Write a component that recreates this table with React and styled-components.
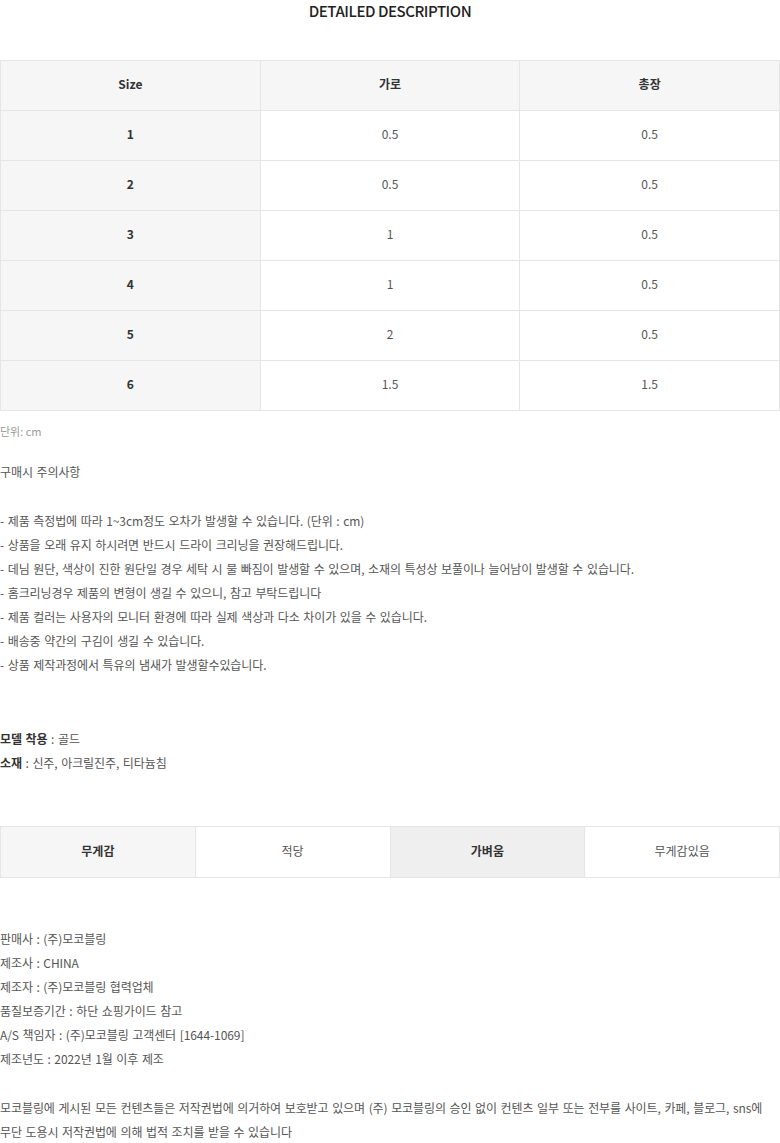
import styled, { createGlobalStyle } from "styled-components";

const GlobalStyle = createGlobalStyle`
  body {
    margin: 0;
    background: #fff;
    font-family: "Noto Sans CJK KR", "Noto Sans", sans-serif;
    color: #555;
  }
`;

const Page = styled.div`
  width: 780px;
  display: flex;
  flex-direction: column;
`;

const Title = styled.h2`
  margin: 0;
  height: 24px;
  line-height: 22px;
  text-align: center;
  font-family: "Noto Sans CJK KR", "Noto Sans", sans-serif;
  font-size: 15px;
  font-weight: 500;
  letter-spacing: -0.45px;
  color: #222;
`;

const SizeTable = styled.div`
  margin-top: 36px;
  display: grid;
  grid-template-columns: repeat(3, 1fr);
  border-top: 1px solid #e5e5e5;
  border-left: 1px solid #e5e5e5;
`;

const Cell = styled.div`
  height: 50px;
  box-sizing: border-box;
  padding-bottom: 4px;
  display: flex;
  align-items: center;
  justify-content: center;
  border-right: 1px solid #e5e5e5;
  border-bottom: 1px solid #e5e5e5;
  background: ${(p) => (p.$head ? "#f6f6f6" : "#fff")};
  font-size: 12px;
  font-weight: ${(p) => (p.$head ? 700 : 400)};
  color: ${(p) => (p.$head ? "#333" : "#555")};
`;

const Unit = styled.p`
  margin: 12px 0 0;
  font-size: 11px;
  line-height: 16px;
  color: #999;
`;

const Line = styled.p`
  margin: 0;
  font-size: 12px;
  line-height: 24px;
  word-spacing: 1px;
  letter-spacing: -0.08px;
  color: #555;
  white-space: nowrap;
`;

const Block = styled.div`
  display: flex;
  flex-direction: column;
  margin-top: ${(p) => p.$gap}px;
`;

const Strong = styled.b`
  font-weight: 700;
  color: #333;
`;

const WeightTable = styled.div`
  margin-top: 51px;
  display: grid;
  grid-template-columns: repeat(4, 1fr);
  border-top: 1px solid #e5e5e5;
  border-left: 1px solid #e5e5e5;
`;

const WeightCell = styled.div`
  height: 51px;
  box-sizing: border-box;
  padding-bottom: 3px;
  display: flex;
  align-items: center;
  justify-content: center;
  border-right: 1px solid #e5e5e5;
  border-bottom: 1px solid #e5e5e5;
  background: ${(p) => p.$bg || "#fff"};
  font-size: 12px;
  font-weight: ${(p) => (p.$bold ? 700 : 400)};
  color: ${(p) => (p.$bold ? "#333" : "#555")};
`;

const sizes = [
  ["1", "0.5", "0.5"],
  ["2", "0.5", "0.5"],
  ["3", "1", "0.5"],
  ["4", "1", "0.5"],
  ["5", "2", "0.5"],
  ["6", "1.5", "1.5"],
];

const notices = [
  "- 제품 측정법에 따라 1~3cm정도 오차가 발생할 수 있습니다. (단위 : cm)",
  "- 상품을 오래 유지 하시려면 반드시 드라이 크리닝을 권장해드립니다.",
  "- 데님 원단, 색상이 진한 원단일 경우 세탁 시 물 빠짐이 발생할 수 있으며, 소재의 특성상 보풀이나 늘어남이 발생할 수 있습니다.",
  "- 홈크리닝경우 제품의 변형이 생길 수 있으니, 참고 부탁드립니다",
  "- 제품 컬러는 사용자의 모니터 환경에 따라 실제 색상과 다소 차이가 있을 수 있습니다.",
  "- 배송중 약간의 구김이 생길 수 있습니다.",
  "- 상품 제작과정에서 특유의 냄새가 발생할수있습니다.",
];

const info = [
  "판매사 : (주)모코블링",
  "제조사 : CHINA",
  "제조자 : (주)모코블링 협력업체",
  "품질보증기간 : 하단 쇼핑가이드 참고",
  "A/S 책임자 : (주)모코블링 고객센터 [1644-1069]",
  "제조년도 : 2022년 1월 이후 제조",
];

export default function App() {
  return (
    <Page>
      <GlobalStyle />
      <Title>DETAILED DESCRIPTION</Title>

      <SizeTable>
        <Cell $head>Size</Cell>
        <Cell $head>가로</Cell>
        <Cell $head>총장</Cell>
        {sizes.map((row) =>
          row.map((v, i) => (
            <Cell key={row[0] + i} $head={i === 0}>
              {v}
            </Cell>
          ))
        )}
      </SizeTable>

      <Unit>단위: cm</Unit>

      <Block $gap={21}>
        <Line>구매시 주의사항</Line>
      </Block>

      <Block $gap={25}>
        {notices.map((n) => (
          <Line key={n}>{n}</Line>
        ))}
      </Block>

      <Block $gap={50}>
        <Line>
          <Strong>모델 착용</Strong> : 골드
        </Line>
        <Line>
          <Strong>소재</Strong> : 신주, 아크릴진주, 티타늄침
        </Line>
      </Block>

      <WeightTable>
        <WeightCell $bg="#f6f6f6" $bold>무게감</WeightCell>
        <WeightCell>적당</WeightCell>
        <WeightCell $bg="#efefef" $bold>가벼움</WeightCell>
        <WeightCell>무게감있음</WeightCell>
      </WeightTable>

      <Block $gap={49}>
        {info.map((n) => (
          <Line key={n}>{n}</Line>
        ))}
      </Block>

      <Block $gap={25}>
        <Line>
          모코블링에 게시된 모든 컨텐츠들은 저작권법에 의거하여 보호받고 있으며 (주) 모코블링의 승인 없이 컨텐츠 일부 또는 전부를 사이트, 카페, 블로그, sns에
        </Line>
        <Line>무단 도용시 저작권법에 의해 법적 조치를 받을 수 있습니다</Line>
      </Block>
    </Page>
  );
}
